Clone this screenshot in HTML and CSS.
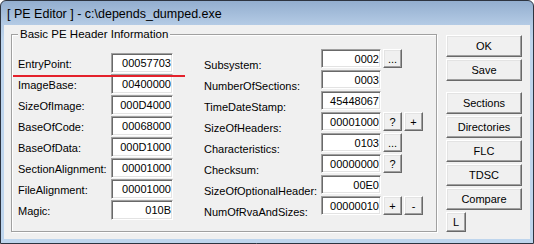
FILE: index.html
```html
<!DOCTYPE html>
<html lang="en">

<head>
    <meta charset="UTF-8">
    <meta name="viewport" content="width=device-width, initial-scale=1.0">
    <title>PE Editor</title>
    <link rel="stylesheet" href="styles.css">
</head>

<body>
    <div class="window">
        <div class="titlebar">[ PE Editor ] - c:\depends_dumped.exe</div>
        <div class="client">
            <fieldset class="group">
                <legend>Basic PE Header Information</legend>
                <div class="cols">
                    <div class="fields left">
                        <label>EntryPoint:</label>
                        <input class="edit" type="text" value="00057703" readonly>
                        <label>ImageBase:</label>
                        <input class="edit" type="text" value="00400000" readonly>
                        <label>SizeOfImage:</label>
                        <input class="edit" type="text" value="000D4000" readonly>
                        <label>BaseOfCode:</label>
                        <input class="edit" type="text" value="00068000" readonly>
                        <label>BaseOfData:</label>
                        <input class="edit" type="text" value="000D1000" readonly>
                        <label>SectionAlignment:</label>
                        <input class="edit" type="text" value="00001000" readonly>
                        <label>FileAlignment:</label>
                        <input class="edit" type="text" value="00001000" readonly>
                        <label>Magic:</label>
                        <input class="edit" type="text" value="010B" readonly>
                    </div>

                    <div class="fields right">
                        <label>Subsystem:</label>
                        <input class="edit" type="text" value="0002" readonly>
                        <div class="tools"><button class="small">...</button></div>

                        <label>NumberOfSections:</label>
                        <input class="edit" type="text" value="0003" readonly>
                        <div class="tools"></div>

                        <label>TimeDateStamp:</label>
                        <input class="edit" type="text" value="45448067" readonly>
                        <div class="tools"></div>

                        <label>SizeOfHeaders:</label>
                        <input class="edit" type="text" value="00001000" readonly>
                        <div class="tools"><button class="small">?</button><button class="small">+</button></div>

                        <label>Characteristics:</label>
                        <input class="edit" type="text" value="0103" readonly>
                        <div class="tools"><button class="small">...</button></div>

                        <label>Checksum:</label>
                        <input class="edit" type="text" value="00000000" readonly>
                        <div class="tools"><button class="small">?</button></div>

                        <label>SizeOfOptionalHeader:</label>
                        <input class="edit" type="text" value="00E0" readonly>
                        <div class="tools"></div>

                        <label>NumOfRvaAndSizes:</label>
                        <input class="edit" type="text" value="00000010" readonly>
                        <div class="tools"><button class="small">+</button><button class="small">-</button></div>
                    </div>
                </div>
            </fieldset>

            <div class="actions">
                <button class="btn">OK</button>
                <button class="btn">Save</button>
                <button class="btn spaced">Sections</button>
                <button class="btn">Directories</button>
                <button class="btn">FLC</button>
                <button class="btn">TDSC</button>
                <button class="btn">Compare</button>
                <button class="btn tiny">L</button>
            </div>
        </div>
        <div class="mark"></div>
    </div>
</body>

</html>
```

FILE: styles.css
```css
body {
    margin: 0;
    font-family: "Liberation Sans", Arial, sans-serif;
    font-size: 11px;
    color: #000;
}

.window {
    position: relative;
    width: 534px;
    height: 244px;
    box-sizing: border-box;
    border: 1px solid #2d3440;
    border-radius: 6px 6px 0 0;
    background: linear-gradient(#93aecf 0, #b4cbe5 24px, #bed5ed 40px);
    padding: 0 3px 4px;
    display: flex;
    flex-direction: column;
}

.titlebar {
    height: 24px;
    line-height: 26px;
    padding-left: 3px;
    font-size: 12.5px;
}

.client {
    flex: 1;
    display: flex;
    gap: 9px;
    padding: 0 8px 7px 7px;
    background: #f0f0f0;
}

.group {
    width: 426px;
    box-sizing: border-box;
    margin: 3px 0 0;
    padding: 0;
    border: 1px solid #a0a0a0;
    box-shadow: inset 1px 1px #fff, 1px 1px #fff;
}

.group legend {
    margin-left: 6px;
    padding: 0 2px;
    line-height: 13px;
    font-size: 11.5px;
    background: #f0f0f0;
}

.cols {
    display: flex;
    gap: 31px;
    padding-left: 6px;
}

.fields {
    display: grid;
    align-content: start;
}

.fields label {
    line-height: 13px;
    white-space: nowrap;
}

.left {
    margin-top: 12px;
    grid-template-columns: 93px 62px;
    grid-auto-rows: 20px;
    row-gap: 1px;
}

.left label {
    padding-top: 5px;
}

.right {
    margin-top: 8px;
    grid-template-columns: 117px 60px auto;
    grid-auto-rows: 19px;
    row-gap: 2px;
}

.right label {
    padding-top: 10px;
}

.edit {
    width: 100%;
    height: 100%;
    box-sizing: border-box;
    margin: 0;
    padding: 0 1px 0 0;
    border: 1px solid;
    border-color: #a0a0a0 #fff #fff #a0a0a0;
    box-shadow: inset 1px 1px #696969, inset -1px -1px #e3e3e3;
    background: #fff;
    font: 11px "Liberation Sans", Arial, sans-serif;
    color: #000;
    text-align: right;
    outline: none;
}

.tools {
    display: flex;
    gap: 2px;
    margin-left: 2px;
}

button {
    box-sizing: border-box;
    margin: 0;
    padding: 0;
    border: 1px solid;
    border-color: #fff #696969 #696969 #fff;
    box-shadow: inset -1px -1px #a0a0a0, inset 1px 1px #e3e3e3;
    background: #f0f0f0;
    font: 11px "Liberation Sans", Arial, sans-serif;
    color: #000;
}

.small {
    width: 19px;
    height: 19px;
}

.actions {
    display: flex;
    flex-direction: column;
    align-items: flex-start;
    gap: 2px;
    padding-top: 10px;
}

.btn {
    width: 76px;
    height: 22px;
}

.btn.spaced {
    margin-top: 9px;
}

.btn.tiny {
    width: 20px;
    height: 20px;
}

.mark {
    position: absolute;
    left: 12px;
    top: 74px;
    width: 172px;
    height: 2px;
    background: #e4212b;
}
```
